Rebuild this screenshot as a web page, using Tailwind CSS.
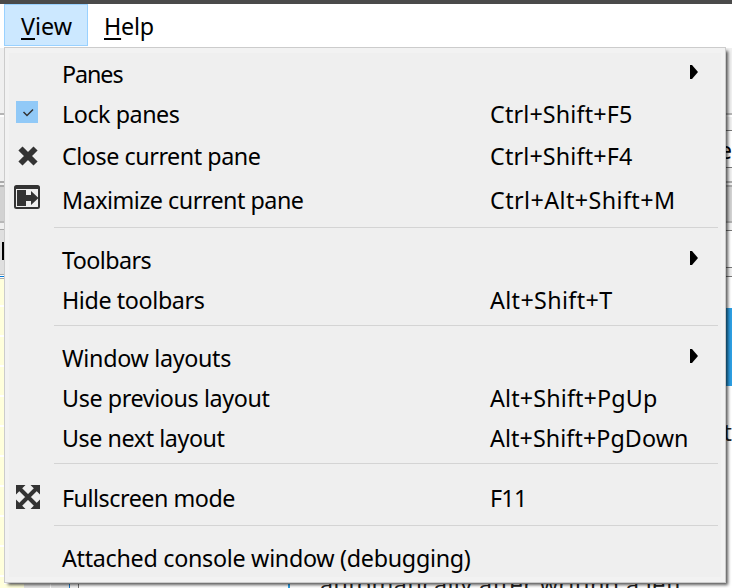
<!DOCTYPE html>
<html lang="en">
<head>
<meta charset="utf-8">
<title>View menu</title>
<script src="https://cdn.jsdelivr.net/npm/@tailwindcss/browser@4"></script>
</head>
<body class="w-[732px] h-[588px] overflow-hidden relative bg-white text-black font-['Noto_Sans','Open_Sans',sans-serif] text-[23.3px] leading-none whitespace-nowrap">
<!-- window behind the menu -->
<div class="flex flex-col w-full h-full">
  <div class="h-1 shrink-0 bg-[#4a4a4a]"></div>
  <nav class="h-11 shrink-0 flex pl-1 bg-white">
    <div class="w-[84px] h-[42px] bg-[#cce8ff] border border-[#99d1ff] flex items-center pl-[16px] pt-[4px]"><span data-w="51" class="inline-block"><span class="underline decoration-2 underline-offset-[3px]">V</span>iew</span></div>
    <div class="h-[42px] flex items-center pl-4 pt-[4px]"><span data-w="50" class="inline-block"><span class="underline decoration-2 underline-offset-[3px]">H</span>elp</span></div>
  </nav>
  <div class="flex justify-between h-[536px] shrink-0">
    <div class="w-1 flex flex-col">
      <div class="h-[65px] bg-[#f0f0f0]"></div><div class="h-[2px] bg-[#b5b5b5]"></div><div class="h-[2px] bg-white"></div>
      <div class="h-[64px] bg-[#f0f0f0]"></div><div class="h-[2px] bg-[#aaa]"></div><div class="h-[2px] bg-[#f0f0f0]"></div><div class="h-[2px] bg-[#aaa]"></div>
      <div class="h-[34px] bg-[#d2d2d2]"></div><div class="h-[2px] bg-[#b8b8b8]"></div><div class="h-[6px] bg-[#f0f0f0]"></div><div class="h-px bg-[#aaa]"></div>
      <div class="h-[12px] bg-[#dfdfdf]"></div><div class="h-[18px] bg-black border-l-2 border-[#dfdfdf]"></div><div class="h-[14px] bg-[#dfdfdf]"></div>
      <div class="h-px bg-[#aaa]"></div><div class="h-px bg-white"></div><div class="h-px bg-[#0078d7]"></div><div class="h-px bg-white"></div><div class="h-px bg-[#aaa]"></div>
      <div class="grow bg-[repeating-linear-gradient(to_bottom,#ffffdc_0px,#ffffdc_26px,#ffffff_26px,#ffffff_28px,#ffffdc_28px,#ffffdc_30px)]"></div>
    </div>
    <div class="w-[6px] flex flex-col text-[23px]">
      <div class="h-[65px] bg-[#f0f0f0]"></div><div class="h-[2px] bg-[#b5b5b5]"></div><div class="h-[2px] bg-white"></div><div class="h-[13px] bg-[#f0f0f0]"></div><div class="h-px bg-[#777]"></div>
      <div class="h-[36px] bg-white flex justify-end overflow-hidden pt-[8px]">e</div><div class="h-px bg-[#777]"></div><div class="h-[13px] bg-[#f0f0f0]"></div>
      <div class="h-[2px] bg-[#aaa]"></div><div class="h-[2px] bg-[#f0f0f0]"></div><div class="h-[2px] bg-[#aaa]"></div><div class="h-[34px] bg-[#d2d2d2]"></div><div class="h-[2px] bg-[#b0b0b0]"></div>
      <div class="h-[7px] bg-[#f0f0f0]"></div><div class="h-px bg-[#777]"></div><div class="h-[36px] bg-white"></div><div class="h-px bg-[#777]"></div><div class="h-[8px] bg-[#f0f0f0]"></div><div class="h-px bg-[#777]"></div>
      <div class="h-[31px] bg-white"></div><div class="h-[78px] bg-[#2d9fe3]"></div>
      <div class="h-[80px] bg-white text-[#222] flex justify-end overflow-hidden pt-[34px] text-[24px]">t</div>
    </div>
  </div>
  <div class="h-1 shrink-0 flex overflow-hidden">
    <div class="w-6 bg-[#ffffdc]"></div><div class="w-[26px] bg-[#e4e4e4]"></div><div class="w-px bg-white"></div><div class="w-[18px] bg-[#e4e4e4]"></div><div class="w-px bg-[#1979ca]"></div><div class="w-2 bg-[#f5f5f5]"></div><div class="w-px bg-[#777]"></div><div class="w-[209px] bg-white"></div><div class="w-[2px] bg-[#2d9fe3]"></div>
    <div class="pl-[30px] -mt-[12px] text-[#222] leading-[24px]"><span data-w="363" class="inline-block">automatically after writing a left</span></div>
  </div>
</div>
<!-- open menu -->
<div class="absolute left-1 top-[47px] w-[722px] h-[536px] bg-[#f2f2f2] border border-[#ccc] px-1 py-[5px] shadow-[3px_3px_3px_-1px_rgba(0,0,0,0.65)]">
  <div class="bg-[#efefef] h-full flex flex-col pt-[2px]">
    <div class="shrink-0 h-10 flex items-center"><span class="w-[53px]"></span><span class="w-[428px]"><span data-w="60.5" class="inline-block">Panes</span></span><svg class="ml-[200px] mb-[6px]" width="8" height="14"><path d="M0 0h2l6 7-6 7H0z"/></svg></div>
    <div class="shrink-0 h-10 flex items-center"><span class="w-[53px] pl-[7px]"><svg class="mb-[7px]" width="22" height="22"><path fill="#91c9f7" d="M0 0h22v22H0z"/><path fill="none" stroke="#333" stroke-width="1.5" d="m7.500 11 3.500 3.500 6-6"/></svg></span><span class="w-[428px]"><span data-w="117.5" class="inline-block">Lock panes</span></span><span data-w="142.5">Ctrl+Shift+F5</span></div>
    <div class="shrink-0 h-11 flex items-center"><span class="w-[53px] pl-[9px]"><svg class="mb-[3px]" width="20" height="20"><path d="m4.500 4.500 11 11M15.500 4.500l-11 11" fill="none" stroke="#333" stroke-width="5.800" stroke-linecap="square"/></svg></span><span class="w-[428px]"><span data-w="198.5" class="inline-block">Close current pane</span></span><span data-w="142.5">Ctrl+Shift+F4</span></div>
    <div class="shrink-0 h-11 flex items-center"><span class="w-[53px] pl-[5px]"><svg class="mb-[8px]" width="26" height="24"><rect x="1" y="1" width="24" height="22" rx="1.500" fill="#efefef" stroke="#333" stroke-width="2"/><path fill="#333" d="M1 1h24v3H1zM3 5h9v5h5V6l7.500 7-7.500 7v-4h-5v5H3z"/></svg></span><span class="w-[428px]"><span data-w="241.5" class="inline-block">Maximize current pane</span></span><span data-w="185.5">Ctrl+Alt+Shift+M</span></div>
    <div class="h-px mt-1 mb-[13px] ml-[45px] mr-[3px] shrink-0 bg-[#d4d4d4]"></div>
    <div class="shrink-0 h-10 flex items-center"><span class="w-[53px]"></span><span class="w-[428px]"><span data-w="89" class="inline-block">Toolbars</span></span><svg class="ml-[200px] mb-[6px]" width="8" height="14"><path d="M0 0h2l6 7-6 7H0z"/></svg></div>
    <div class="shrink-0 h-10 flex items-center"><span class="w-[53px]"></span><span class="w-[428px]"><span data-w="142.5" class="inline-block">Hide toolbars</span></span><span data-w="122.5">Alt+Shift+T</span></div>
    <div class="h-px mt-1 mb-[13px] ml-[45px] mr-[3px] shrink-0 bg-[#d4d4d4]"></div>
    <div class="shrink-0 h-10 flex items-center"><span class="w-[53px]"></span><span class="w-[428px]"><span data-w="169" class="inline-block">Window layouts</span></span><svg class="ml-[200px] mb-[6px]" width="8" height="14"><path d="M0 0h2l6 7-6 7H0z"/></svg></div>
    <div class="shrink-0 h-10 flex items-center"><span class="w-[53px]"></span><span class="w-[428px]"><span data-w="207.5" class="inline-block">Use previous layout</span></span><span data-w="167.5">Alt+Shift+PgUp</span></div>
    <div class="shrink-0 h-10 flex items-center"><span class="w-[53px]"></span><span class="w-[428px]"><span data-w="162.5" class="inline-block">Use next layout</span></span><span data-w="198.5">Alt+Shift+PgDown</span></div>
    <div class="h-px mt-1 mb-[13px] ml-[45px] mr-[3px] shrink-0 bg-[#d4d4d4]"></div>
    <div class="shrink-0 h-11 flex items-center"><span class="w-[53px] pl-[7px]"><svg class="mb-[5px]" width="24" height="24"><path d="m4 4 16 16M20 4 4 20" stroke="#333" stroke-width="4"/><path fill="#333" d="M0 0h9.500L0 9.500zM24 0h-9.500L24 9.500zM0 24h9.500L0 14.500zM24 24h-9.500l9.500-9.500z"/></svg></span><span class="w-[428px]"><span data-w="173" class="inline-block">Fullscreen mode</span></span><span data-w="36.5">F11</span></div>
    <div class="h-px mt-1 mb-[13px] ml-[45px] mr-[3px] shrink-0 bg-[#d4d4d4]"></div>
    <div class="shrink-0 h-10 flex items-center"><span class="w-[53px]"></span><span class="w-[428px]"><span data-w="408.5" class="inline-block">Attached console window (debugging)</span></span></div>
  </div>
</div>
<script>
function track() {
  document.querySelectorAll('[data-w]').forEach(function (el) {
    el.style.letterSpacing = '0px';
    var gap = Number(el.dataset.w) - el.getBoundingClientRect().width;
    el.style.letterSpacing = (gap / el.textContent.length).toFixed(3) + 'px';
  });
}
track();
document.fonts.ready.then(track);
</script>
</body>
</html>
